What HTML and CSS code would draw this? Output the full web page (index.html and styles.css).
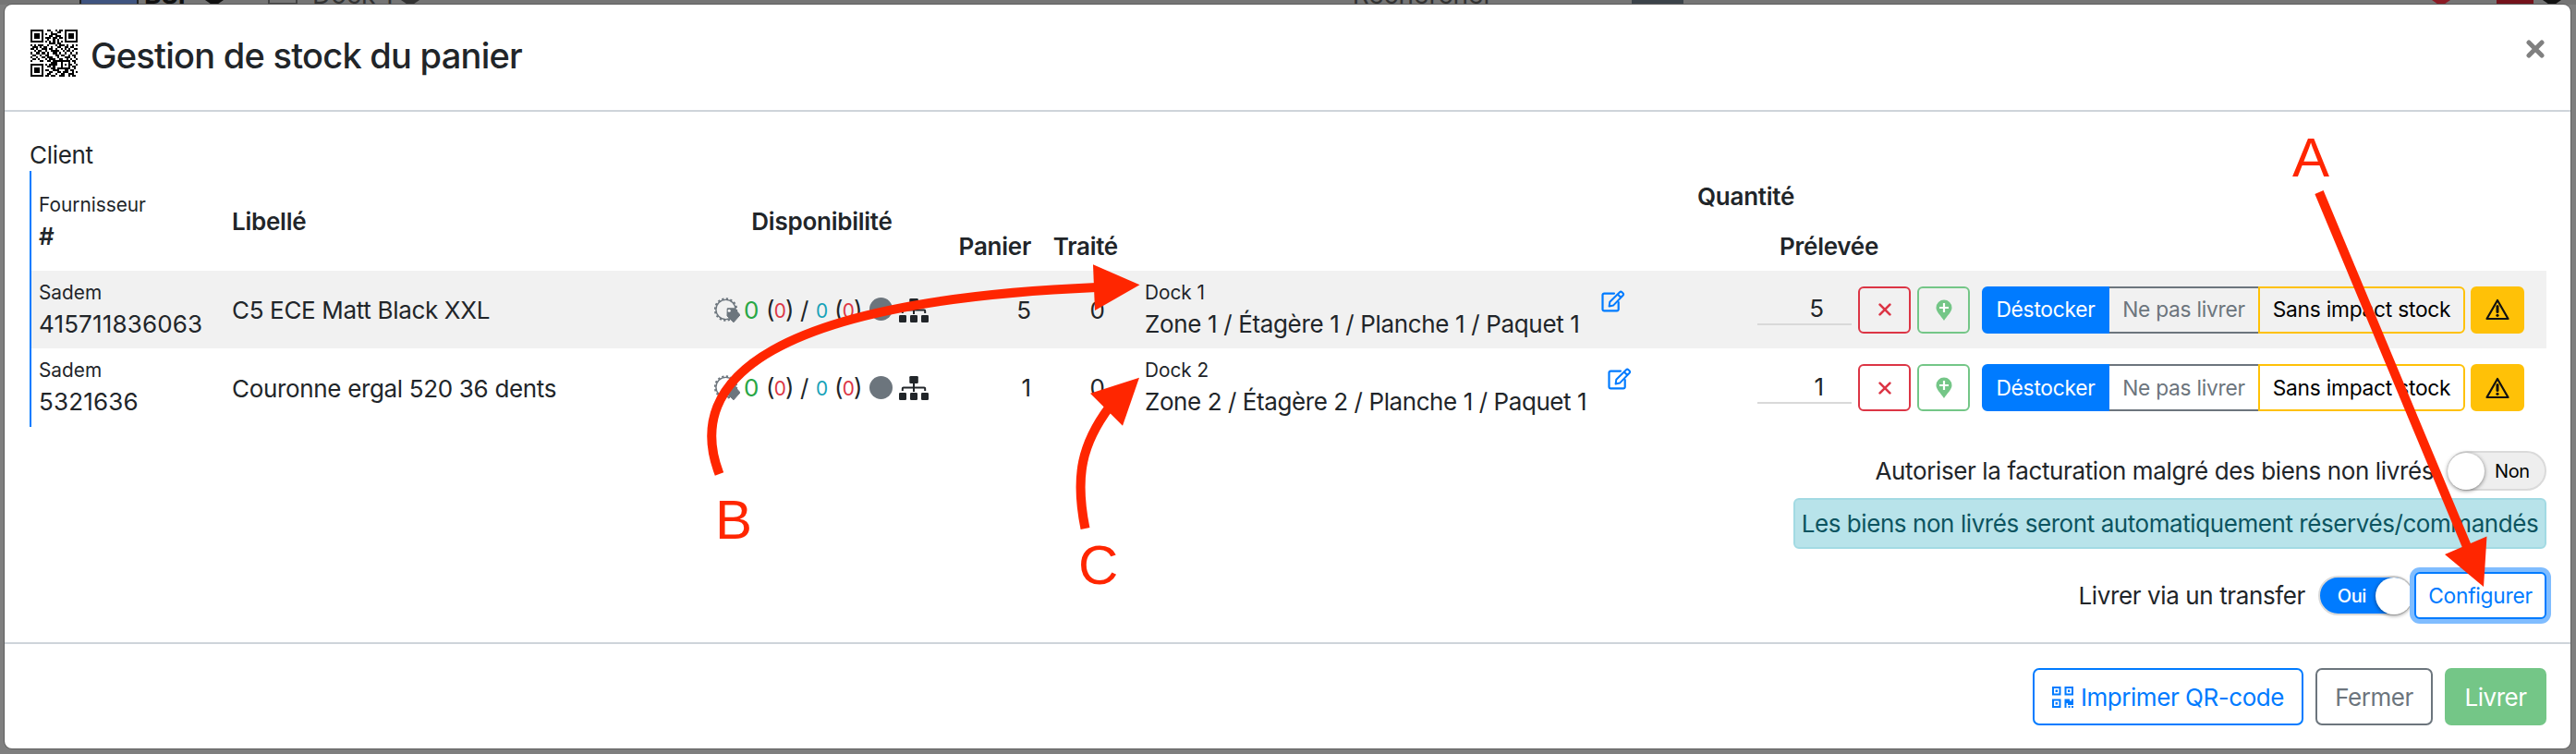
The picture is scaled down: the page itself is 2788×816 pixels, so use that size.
FILE: index.html
```html
<!DOCTYPE html>
<html lang="fr">
<head>
<meta charset="utf-8">
<title>Gestion de stock du panier</title>
<link rel="stylesheet" href="styles.css">
</head>
<body>
<svg class="defs" width="0" height="0" aria-hidden="true">
  <symbol id="i-edit" viewBox="0 0 26 24"><path d="M14 3.6H3.2A1.7 1.7 0 0 0 1.5 5.3v15.4a1.7 1.7 0 0 0 1.7 1.7H17a1.7 1.7 0 0 0 1.7-1.7V13" fill="none" stroke="currentColor" stroke-width="2.2" stroke-linecap="round"/><path d="M8.6 17.6l.7-4.8L20 2.2a1.7 1.7 0 0 1 2.400 0l1.100 1.100a1.700 1.700 0 0 1 0 2.400L13 16.600zM17.800 4.500l3.500 3.500" fill="none" stroke="currentColor" stroke-width="2" stroke-linejoin="round"/></symbol>
  <symbol id="i-gear" viewBox="0 0 28 28"><circle cx="12.500" cy="13" r="10.600" fill="none" stroke="#6c757d" stroke-width="1.400"/><circle cx="12.500" cy="13" r="11.800" fill="none" stroke="#6c757d" stroke-width="1.800" stroke-dasharray="2.300 2.330"/><path d="M14.200 11.800h7.600l6.200 7-7 8-7-6.800z" fill="#6c757d" stroke="#6c757d" stroke-width="1" stroke-linejoin="round"/><circle cx="16.200" cy="14.200" r="1.500" fill="#fff"/></symbol>
  <symbol id="i-tree" viewBox="0 0 32 26"><g fill="#212529"><rect x="11.300" y="0" width="9.500" height="8" rx="1.300"/><rect x="0" y="18" width="8" height="8" rx="1.300"/><rect x="12" y="18" width="8" height="8" rx="1.300"/><rect x="24" y="18" width="8" height="8" rx="1.300"/></g><path d="M16 7v10M3.800 16v-2.600a1 1 0 0 1 1-1h22.400a1 1 0 0 1 1 1V16" fill="none" stroke="#212529" stroke-width="2"/></symbol>
  <symbol id="i-x" viewBox="0 0 14 14"><path d="M1.600 1.600l10.800 10.800M12.400 1.600L1.600 12.400" stroke="currentColor" stroke-width="2.600" stroke-linecap="round"/></symbol>
  <symbol id="i-pin" viewBox="0 0 18 23"><path d="M9 0.500a8.500 8.500 0 0 1 8.500 8.500c0 4.500-5 8.500-8.500 14C5.500 17.500.500 13.500.500 9A8.500 8.500 0 0 1 9 .500z" fill="currentColor"/><path class="pin-plus" d="M9 4v10M4 9h10" stroke-width="2.200"/></symbol>
  <symbol id="i-warn" viewBox="0 0 26 24"><path d="M13 2L24.500 22H1.500z" fill="none" stroke="#111" stroke-width="2.200" stroke-linejoin="round"/><path d="M13 8.500v6" stroke="#111" stroke-width="3" stroke-linecap="round"/><circle cx="13" cy="18.300" r="1.600" fill="#111"/></symbol>
  <symbol id="i-qr" viewBox="0 0 23 23"><path fill="none" stroke="currentColor" stroke-width="2" d="M1 1h7.500v7.500H1zM14.500 1H22v7.500h-7.500zM1 14.500h7.500V22H1z"/><path fill="currentColor" d="M3.600 3.600h2.400v2.400H3.600zM17 3.600h2.400v2.400H17zM3.600 17h2.400v2.400H3.600zM13.500 13.500h5.500v2h2V13.500h2v6.500h-6v-2h-1.500v5h-2zM17.500 21h2v2h-2zM21 21h2v2h-2z"/></symbol>
</svg>

<div class="backdrop">
  <div class="bg-flag"></div><span class="bg-text bg-bold">BSP</span><i class="bg-caret"></i>
  <i class="bg-box"></i><span class="bg-text">Dock 1</span><i class="bg-caret bg-dim"></i>
  <span class="bg-text bg-search">Rechercher</span><i class="bg-btn"></i><i class="bg-caret bg-far"></i><i class="bg-red"></i><i class="bg-caret"></i>
</div>

<main class="modal">
  <header class="head">
    <svg class="qr" viewBox="0 0 25 25" shape-rendering="crispEdges"><path class="qr-mod" d="M0 .5h7M9 .5h2M13 .5h1M15 .5h2M18 .5h7M0 1.500h1M6 1.500h1M11 1.500h1M14 1.500h2M18 1.500h1M24 1.500h1M0 2.500h1M2 2.500h3M6 2.500h1M8 2.500h1M11 2.500h3M18 2.500h1M20 2.500h3M24 2.500h1M0 3.500h1M2 3.500h3M6 3.500h1M10 3.500h2M13 3.500h3M18 3.500h1M20 3.500h3M24 3.500h1M0 4.500h1M2 4.500h3M6 4.500h1M8 4.500h3M12 4.500h2M15 4.500h2M18 4.500h1M20 4.500h3M24 4.500h1M0 5.500h1M6 5.500h1M9 5.500h1M12 5.500h1M14 5.500h1M18 5.500h1M24 5.500h1M0 6.500h7M8 6.500h1M10 6.500h1M12 6.500h1M14 6.500h1M16 6.500h1M18 6.500h7M10 7.500h3M14 7.500h2M0 8.500h1M2 8.500h1M4 8.500h3M9 8.500h1M13 8.500h1M15 8.500h3M19 8.500h1M22 8.500h1M24 8.500h1M1 9.500h3M5 9.500h1M7 9.500h2M11 9.500h1M14 9.500h2M18 9.500h2M21 9.500h2M0 10.500h2M3 10.500h1M6 10.500h3M10 10.500h2M13 10.500h1M16 10.500h1M18 10.500h1M20 10.500h1M23 10.500h2M2 11.500h1M4 11.500h2M8 11.500h1M11 11.500h4M17 11.500h1M19 11.500h2M22 11.500h1M0 12.500h1M3 12.500h2M6 12.500h2M9 12.500h1M12 12.500h2M15 12.500h1M18 12.500h1M21 12.500h1M24 12.500h1M1 13.500h2M5 13.500h1M8 13.500h2M13 13.500h2M16 13.500h2M20 13.500h1M22 13.500h2M0 14.500h1M3 14.500h1M6 14.500h2M9 14.500h3M14 14.500h1M18 14.500h3M23 14.500h1M1 15.500h2M4 15.500h1M8 15.500h1M10 15.500h3M15 15.500h2M19 15.500h1M21 15.500h1M24 15.500h1M0 16.500h1M5 16.500h2M9 16.500h2M12 16.500h9M22 16.500h2M11 17.500h3M16 17.500h1M20 17.500h1M23 17.500h1M0 18.500h7M8 18.500h1M10 18.500h4M16 18.500h1M18 18.500h1M20 18.500h2M24 18.500h1M0 19.500h1M6 19.500h1M9 19.500h2M12 19.500h1M16 19.500h1M20 19.500h1M22 19.500h2M0 20.500h1M2 20.500h3M6 20.500h1M11 20.500h2M14 20.500h7M23 20.500h1M0 21.500h1M2 21.500h3M6 21.500h1M8 21.500h2M12 21.500h3M18 21.500h2M21 21.500h2M0 22.500h1M2 22.500h3M6 22.500h1M10 22.500h2M14 22.500h2M17 22.500h3M22 22.500h1M24 22.500h1M0 23.500h1M6 23.500h1M9 23.500h2M13 23.500h1M16 23.500h2M20 23.500h3M0 24.500h7M8 24.500h2M11 24.500h2M15 24.500h3M20 24.500h1M22 24.500h2"/></svg>
    <h1 class="title">Gestion de stock du panier</h1>
    <svg class="close" viewBox="0 0 20 22"><path d="M3 4l14 14M17 4L3 18"/></svg>
  </header>

  <section class="body">
    <div class="client">Client</div>
    <div class="table">
      <div class="row row-head">
        <div class="ref"><small>Fournisseur</small><b>#</b></div>
        <b class="h-label">Libellé</b>
        <b class="h-avail">Disponibilité</b>
        <b class="num low">Panier</b>
        <b class="num low">Traité</b>
        <div></div>
        <div class="h-qty"><b>Quantité</b><b class="h-taken">Prélevée</b></div>
      </div>

      <div class="row row-odd">
        <div class="ref"><small>Sadem</small><span class="code">415711836063</span></div>
        <div class="name">C5 ECE Matt Black XXL</div>
        <div class="avail"><svg class="gear"><use href="#i-gear"/></svg><span class="ok">0</span><span class="par">(<em>0</em>)</span><span class="slash">/</span><span class="info">0</span><span class="par">(<em>0</em>)</span><i class="dot"></i><svg class="tree"><use href="#i-tree"/></svg></div>
        <div class="num">5</div>
        <div class="num done">0</div>
        <div class="place"><div class="ref"><small>Dock 1</small><span class="zone">Zone 1 / Étagère 1 / Planche 1 / Paquet 1</span></div><svg class="edit"><use href="#i-edit"/></svg></div>
        <div class="qty"><span class="input">5</span></div>
        <div class="actions">
          <span class="btn sq red"><svg class="x"><use href="#i-x"/></svg></span>
          <span class="btn sq green"><svg class="pin"><use href="#i-pin"/></svg></span>
          <span class="group"><span class="btn b-out">Déstocker</span><span class="btn b-no">Ne pas livrer</span><span class="btn b-free">Sans impact stock</span></span>
          <span class="btn sq warn"><svg class="w"><use href="#i-warn"/></svg></span>
        </div>
      </div>

      <div class="row">
        <div class="ref"><small>Sadem</small><span class="code">5321636</span></div>
        <div class="name">Couronne ergal 520 36 dents</div>
        <div class="avail"><svg class="gear"><use href="#i-gear"/></svg><span class="ok">0</span><span class="par">(<em>0</em>)</span><span class="slash">/</span><span class="info">0</span><span class="par">(<em>0</em>)</span><i class="dot"></i><svg class="tree"><use href="#i-tree"/></svg></div>
        <div class="num">1</div>
        <div class="num done">0</div>
        <div class="place"><div class="ref"><small>Dock 2</small><span class="zone zone-b">Zone 2 / Étagère 2 / Planche 1 / Paquet 1</span></div><svg class="edit"><use href="#i-edit"/></svg></div>
        <div class="qty"><span class="input">1</span></div>
        <div class="actions">
          <span class="btn sq red"><svg class="x"><use href="#i-x"/></svg></span>
          <span class="btn sq green"><svg class="pin"><use href="#i-pin"/></svg></span>
          <span class="group"><span class="btn b-out">Déstocker</span><span class="btn b-no">Ne pas livrer</span><span class="btn b-free">Sans impact stock</span></span>
          <span class="btn sq warn"><svg class="w"><use href="#i-warn"/></svg></span>
        </div>
      </div>
    </div>

    <div class="options">
      <div class="opt opt-bill"><span class="t-bill">Autoriser la facturation malgré des biens non livrés</span><span class="switch off"><i class="knob"></i><span>Non</span></span></div>
      <div class="alert"><span>Les biens non livrés seront automatiquement réservés/commandés</span></div>
      <div class="opt opt-transfer"><span class="t-transfer">Livrer via un transfer</span><span class="switch on"><span>Oui</span><i class="knob"></i></span><span class="btn config">Configurer</span></div>
    </div>
  </section>

  <footer class="foot">
    <span class="btn lg print"><svg class="qri"><use href="#i-qr"/></svg><span>Imprimer QR-code</span></span>
    <span class="btn lg shut">Fermer</span>
    <span class="btn lg deliver">Livrer</span>
  </footer>
</main>

<svg class="notes" viewBox="0 0 2788 816">
  <g class="arrow-line">
    <path d="M2510 208L2671 594"/>
    <path d="M778.500 513C739 410 836 326 1187 311"/>
    <path d="M1174.500 572C1163 515 1171 480 1201 440"/>
  </g>
  <g class="note-fill">
    <path d="M2688 635L2646 600L2691.500 580.500z"/>
    <path d="M1233.500 308.300L1183 286.300L1185 336z"/>
    <path d="M1233 408.700L1180 425.700L1215 460.700z"/>
    <text x="2481" y="191">A</text>
    <text x="774" y="583">B</text>
    <text x="1167" y="632">C</text>
  </g>
</svg>
</body>
</html>
```

FILE: styles.css
```css
* { box-sizing: border-box; }
body { margin: 0; width: 2788px; height: 816px; overflow: hidden; background: #7f7f7f; font-family: Inter, "Liberation Sans", sans-serif; font-size: 26px; line-height: 36px; color: #212529; padding: 5px; }
svg { display: block; flex: none; }
.defs { position: absolute; }
i, em { font-style: normal; }
b { font-weight: 600; letter-spacing: -.25px; }
small { font-size: 20.800px; }

/* dimmed page behind the dialog */
.backdrop { position: absolute; left: 0; top: 0; width: 2788px; height: 5px; overflow: hidden; display: flex; align-items: flex-start; padding-left: 86px; background: #757575; }
.bg-flag { width: 64px; height: 9px; background: #3f5480; border: 2px solid #222; border-top: 0; margin-right: 6px; }
.bg-text { font-size: 28px; line-height: 28px; margin-top: -20px; color: #333; }
.bg-bold { font-weight: 700; color: #111; width: 66px; }
.bg-caret { border-left: 10px solid transparent; border-right: 10px solid transparent; border-top: 7px solid #111; }
.bg-box { width: 32px; height: 5px; border: 2px solid #444; border-top: 0; margin: 0 16px 0 48px; }
.bg-dim { border-top-color: #333; margin-left: 8px; }
.bg-search { margin-left: 1010px; }
.bg-btn { width: 56px; height: 5px; background: #3b434a; margin-left: 150px; }
.bg-far { margin-left: 810px; border-top-color: #8b1a24; }
.bg-red { width: 40px; height: 5px; background: #74121b; margin: 0 10px 0 50px; }

.modal { position: relative; width: 2777px; height: 805px; background: #fff; border-radius: 8px; box-shadow: 0 0 0 1px #5e5e5e; display: flex; flex-direction: column; }
.head { height: 116px; border-bottom: 2px solid #ced4da; display: flex; align-items: flex-start; padding: 27px 28px 0 28px; }
.qr { width: 51px; height: 51px; background: #fff; }
.qr-mod { stroke: #000; stroke-width: 1; }
.title { margin: 0 auto 0 14px; font-size: 38px; line-height: 56px; font-weight: 500; letter-spacing: -.74px; white-space: nowrap; }
.close { width: 20px; height: 22px; margin-top: 10px; }
.close path { stroke: #808080; stroke-width: 5; stroke-linecap: round; }

.body { height: 574px; padding: 28px 26px 0 27px; }
.client { height: 36px; padding-top: 1px; letter-spacing: -.3px; }
.table { border-left: 2px solid #007bff; }
.row { display: grid; grid-template-columns: 209px 522px 233px 110px 94px 627px 167px 730px; height: 84px; align-items: center; padding-left: 8px; white-space: nowrap; }
.row + .row + .row { height: 85px; }
.row-head { height: 108px; }
.row-odd { background: #f1f1f1; }
.ref { display: flex; flex-direction: column; padding-bottom: 3px; line-height: 34px; }
.code { letter-spacing: .15px; }
.row-head .ref { padding-bottom: 1px; }
.h-label, .h-avail { padding-top: 2px; }
.h-avail { text-align: center; }
.name { padding-top: 2px; letter-spacing: -.33px; }
.num { text-align: right; padding-top: 1px; }
.low { padding-top: 56px; }
.done { padding-right: 14px; }
.h-qty { display: flex; flex-direction: column; gap: 18px; padding-top: 2px; }
.h-taken { margin-left: 89px; }
.avail { display: flex; align-items: center; height: 36px; margin-top: 1px; }
.gear { width: 28px; height: 28px; }
.ok { color: #28a745; margin-left: 4px; width: 24px; }
.par { width: 30px; display: flex; letter-spacing: -.8px; }
.par em { font-size: 20.800px; color: #dc3545; padding-top: 2px; }
.slash { margin-left: 7px; width: 17px; }
.info { color: #17a2b8; font-size: 20.800px; padding-top: 2px; width: 20px; }
.dot { width: 25px; height: 25px; border-radius: 50%; background: #6c757d; margin: 0 7px 2px 8px; flex: none; }
.tree { width: 32px; height: 26px; }
.place { display: flex; align-items: center; padding-left: 29px; gap: 23px; }
.zone { letter-spacing: -.35px; }
.zone-b { letter-spacing: -.42px; }
.edit { width: 26px; height: 24px; color: #007bff; margin-bottom: 19px; }
.input { display: block; width: 102px; height: 34px; margin-left: 65px; padding-right: 30px; border-bottom: 2px solid #d9d9d9; text-align: right; line-height: 32px; }

.btn { display: inline-flex; align-items: center; justify-content: center; height: 51px; border: 2px solid; border-radius: 6px; font-size: 22.750px; letter-spacing: -.25px; white-space: nowrap; flex: none; }
.actions { display: flex; align-items: center; padding-left: 7px; }
.sq { width: 57px; }
.red { color: #dc3545; margin-right: 7px; }
.green { color: #74c687; margin-right: 13px; }
.x { width: 14px; height: 14px; }
.pin { width: 18px; height: 23px; }
.pin-plus { stroke: #fff; }
.group { display: flex; margin-right: 6px; }
.b-out { width: 138px; background: #007bff; border-color: #007bff; color: #fff; border-radius: 6px 0 0 6px; }
.b-no { width: 161px; color: #6c757d; border-radius: 0; border-width: 2px 0; }
.b-free { width: 224px; color: #000; border-color: #ffc107; border-radius: 0 6px 6px 0; }
.warn { width: 58px; background: #ffc107; border-color: #ffc107; }
.w { width: 26px; height: 24px; }

.options { display: flex; flex-direction: column; align-items: flex-end; padding-top: 26px; white-space: nowrap; letter-spacing: -.38px; }
.opt { display: flex; align-items: center; }
.opt-bill { height: 43px; }
.t-bill { margin-right: 15px; padding-top: 1px; }
.switch { width: 107px; height: 43px; border-radius: 22px; border: 2px solid #dadada; display: flex; align-items: center; font-size: 20px; }
.off { background: #eee; color: #000; }
.off .knob { margin-left: -2px; }
.off span { margin-left: 11px; }
.on { width: 103px; background: #007bff; color: #fff; justify-content: flex-end; font-weight: 500; }
.on span { margin-right: 10px; }
.on .knob { margin-right: -1px; }
.knob { width: 40px; height: 40px; border-radius: 50%; background: #fff; box-shadow: 0 1px 4px rgba(0,0,0,.5); flex: none; }
.alert { margin-top: 8px; width: 815px; height: 55px; border: 2px solid #a2dae3; border-radius: 6px; background: #b8e3ea; color: #0c5460; display: flex; align-items: center; justify-content: center; letter-spacing: -.43px; }
.opt-transfer { margin-top: 25px; height: 51px; }
.t-transfer { margin-right: 14px; }
.config { width: 143px; margin-left: 1px; color: #007bff; border-color: #007bff; box-shadow: 0 0 0 5px #80bdff; background: #fff; }

.foot { height: 115px; border-top: 2px solid #ced4da; display: flex; justify-content: flex-end; gap: 13px; padding: 26px 26px 0 0; }
.lg { height: 62px; font-size: 26px; border-radius: 7px; letter-spacing: -.45px; padding-top: 1px; }
.print { width: 293px; color: #007bff; gap: 8px; }
.qri { width: 23px; height: 23px; }
.shut { width: 127px; color: #6c757d; }
.deliver { width: 110px; background: #74c687; border-color: #74c687; color: #fff; }

/* annotation layer drawn over the dialog */
.notes { position: absolute; left: 0; top: 0; width: 2788px; height: 816px; }
.arrow-line { fill: none; stroke: #ff2600; stroke-width: 10; }
.note-fill { fill: #ff2600; font-family: "Liberation Sans", Arial, sans-serif; font-size: 60px; }
```
